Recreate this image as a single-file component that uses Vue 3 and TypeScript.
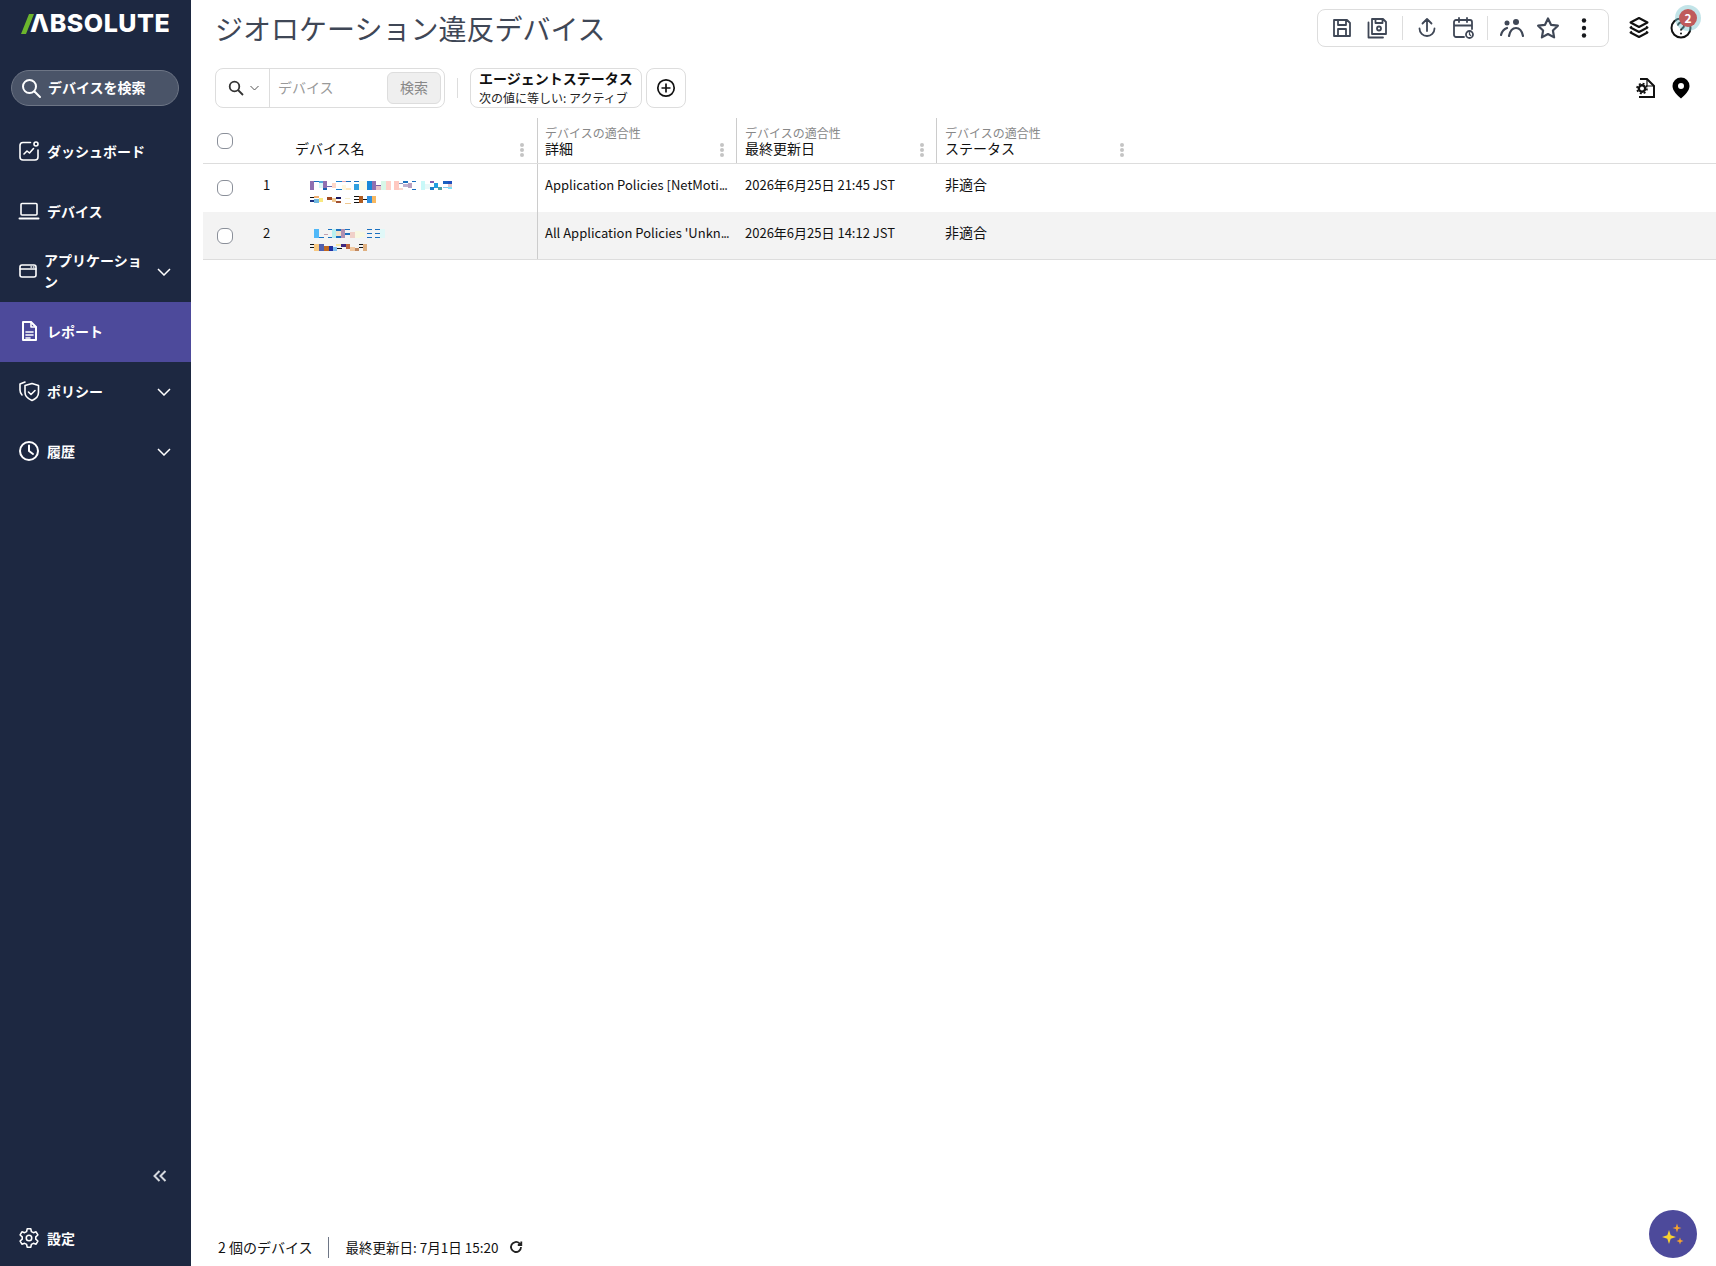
<template>
  <div class="app">
    <aside class="sidebar">
      <div class="logo">
        <svg class="logo-slash" width="14" height="20" viewBox="0 0 14 20"><polygon points="8,0 13,0 5,20 0,20" fill="#6cb52d" /></svg>
        <span class="logo-text">ΛBSOLUTE</span>
      </div>
      <div class="side-search">
        <svg width="22" height="22" viewBox="0 0 22 22" fill="none" stroke="#fff" stroke-width="2" stroke-linecap="round"><circle cx="9.5" cy="9.5" r="6.5" /><path d="M14.5 14.5 20 20" /></svg>
        <span class="side-search-label">デバイスを検索</span>
      </div>
      <nav class="nav">
        <div v-for="item in navItems" :key="item.label" class="nav-item" :class="{ active: item.active, narrow: item.icon === 'app' }">
          <span class="nav-icon">
            <svg width="22" height="22" viewBox="0 0 22 22" fill="none" stroke="#fff" stroke-width="1.6" stroke-linecap="round" stroke-linejoin="round">
              <template v-if="item.icon === 'dash'">
                <path d="M12.5 2.500H5a3 3 0 0 0-3 3V17a3 3 0 0 0 3 3h12a3 3 0 0 0 3-3V10" />
                <circle cx="18" cy="4" r="2" />
                <path d="M6 14l3-3 2.500 2 4-4.500" />
              </template>
              <template v-else-if="item.icon === 'laptop'">
                <rect x="3" y="3.500" width="16" height="11.500" rx="1" />
                <path d="M1.500 18.500h19" stroke-width="2" />
              </template>
              <template v-else-if="item.icon === 'app'">
                <rect x="2" y="5" width="16" height="12" rx="2" />
                <path d="M2 9h16M13 7h.5M15.500 7h.5" />
              </template>
              <template v-else-if="item.icon === 'report'">
                <path d="M5 2h8l5 5v13H5z" stroke-width="2" />
                <path d="M13 2v5h5M8 12h7M8 15h7M8 18h4" />
              </template>
              <template v-else-if="item.icon === 'policy'">
                <path d="M7 5.500l7-2 6.500 2v7c0 4-3 6.500-6.500 8-3.500-1.500-7-4-7-8z" />
                <path d="M10.500 12l2.500 2.500 4-4M4 15c-1-1-2-2.500-2-5V4l5-2" />
              </template>
              <template v-else>
                <circle cx="11" cy="11" r="9" stroke-width="2" />
                <path d="M11 5.500V11l4 3" stroke-width="2" />
              </template>
            </svg>
          </span>
          <span class="nav-label">{{ item.label }}</span>
          <svg v-if="item.expand" class="nav-chevron" width="14" height="8" viewBox="0 0 14 8" fill="none" stroke="#fff" stroke-width="1.5"><path d="M1 1l6 6 6-6" /></svg>
        </div>
      </nav>
      <div class="collapse">
        <svg width="14" height="12" viewBox="0 0 14 12" fill="none" stroke="#d5d8de" stroke-width="2"><path d="M6.500 1 1.500 6l5 5M12.500 1l-5 5 5 5" /></svg>
      </div>
      <div class="settings">
        <svg width="22" height="22" viewBox="0 0 24 24" fill="none" stroke="#fff" stroke-width="1.7" stroke-linejoin="round">
          <circle cx="12" cy="12" r="3" />
          <path d="M10 2h4l.6 3 2.200 1.200 2.900-1 2 3.500-2.300 2v2.600l2.300 2-2 3.500-2.900-1-2.200 1.200-.6 3h-4l-.6-3-2.200-1.200-2.900 1-2-3.500 2.300-2v-2.600l-2.300-2 2-3.500 2.900 1L9.400 5z" />
        </svg>
        <span>設定</span>
      </div>
    </aside>

    <main class="main">
      <header class="top">
        <h1>ジオロケーション違反デバイス</h1>
        <div class="top-right">
          <div class="toolbar">
            <svg class="tool" viewBox="0 0 24 24"><path d="M4 4h13l3 3v13H4zM8 4v5h8V4M8 20v-7h8v7" /></svg>
            <svg class="tool" viewBox="0 0 24 24"><path d="M6 3h11l3 3v12H6zM9.500 3v4h7V3M2.500 6.500V21.500H17" /><circle cx="13" cy="12.500" r="2" /></svg>
            <span class="tool-sep" />
            <svg class="tool" viewBox="0 0 24 24"><path d="M12 15V3M7.500 7.500 12 3l4.500 4.500M4.500 12.500a7.500 7.500 0 0 0 15 0" /></svg>
            <svg class="tool" viewBox="0 0 24 24"><path d="M13 21H5a2 2 0 0 1-2-2V6a2 2 0 0 1 2-2h14a2 2 0 0 1 2 2v7M3 9.500h18M8 2v4M16 2v4" /><circle cx="18.500" cy="18.500" r="3.500" /><path d="M18.500 16.500v2l1.200 1" stroke-width="1.200" /></svg>
            <span class="tool-sep" />
            <svg class="tool" viewBox="0 0 24 24"><circle cx="7" cy="7" r="2.500" fill="#3f4756" stroke="none" /><circle cx="16" cy="6" r="3" fill="#3f4756" stroke="none" /><path d="M1 19c1-4 3-6 6-7M9 20c1-5 3.500-8 7-8s6 3 7 8" stroke-width="2.200" /></svg>
            <svg class="tool" viewBox="0 0 24 24"><path d="M12 2.500l3 6.300 6.900.9-5 4.800 1.200 6.900-6.100-3.400-6.100 3.400 1.200-6.900-5-4.800 6.900-.9z" stroke-width="2.200" /></svg>
            <svg class="tool" viewBox="0 0 24 24"><circle cx="12" cy="4.500" r="2.200" fill="#17191d" stroke="none" /><circle cx="12" cy="12" r="2.200" fill="#17191d" stroke="none" /><circle cx="12" cy="19.500" r="2.200" fill="#17191d" stroke="none" /></svg>
          </div>
          <svg class="top-icon layers" viewBox="0 0 24 24" fill="none" stroke="#111" stroke-width="2" stroke-linejoin="round"><path d="M12 2l8.500 4.500L12 11 3.500 6.500zM5 10.500 3.500 11.500 12 16l8.500-4.500-1.500-1M5 15.500l-1.500 1L12 21l8.500-4.500-1.500-1" /></svg>
          <div class="help">
            <svg class="top-icon" viewBox="0 0 24 24" fill="none" stroke="#111" stroke-width="2"><circle cx="12" cy="12" r="9.500" /><path d="M9 9.500a3 3 0 1 1 4.500 2.600c-1 .6-1.500 1.200-1.500 2.400" /><circle cx="12" cy="17.500" r="1" fill="#111" stroke="none" /></svg>
            <span class="badge">2</span>
          </div>
        </div>
      </header>

      <div class="filters">
        <div class="search-box">
          <div class="search-type">
            <svg width="16" height="16" viewBox="0 0 16 16" fill="none" stroke="#333" stroke-width="1.800"><circle cx="6.500" cy="6.500" r="4.800" /><path d="M10 10l5 5" /></svg>
            <svg width="9" height="6" viewBox="0 0 9 6" fill="none" stroke="#555" stroke-width="1"><path d="M.5 1l4 4 4-4" /></svg>
          </div>
          <span class="search-input">デバイス</span>
          <button class="search-btn" type="button">検索</button>
        </div>
        <span class="filter-sep" />
        <div class="chip">
          <strong>エージェントステータス</strong>
          <small>次の値に等しい: アクティブ</small>
        </div>
        <button class="add-btn" type="button">
          <svg width="20" height="20" viewBox="0 0 20 20" fill="none" stroke="#111" stroke-width="1.700"><circle cx="10" cy="10" r="8.200" /><path d="M10 5.500v9M5.500 10h9" /></svg>
        </button>
        <div class="map-icons">
          <svg class="top-icon" viewBox="0 0 24 24" fill="none" stroke="#111" stroke-width="2"><path d="M7 3h7l7 7v11H6" /><path d="M14 3v7h7" stroke-width="1.200" /><circle cx="9" cy="12.500" r="3.200" stroke-width="2.400" /><circle cx="9" cy="12.500" r="5" stroke-width="1.600" stroke-dasharray="2 1.930" /></svg>
          <svg class="top-icon" viewBox="0 0 24 24"><path fill-rule="evenodd" fill="#000" d="M12 1.500a8.500 8.500 0 0 0-8.500 8.500c0 5 5 9.500 8.500 12.500 3.500-3 8.500-7.500 8.500-12.500A8.500 8.500 0 0 0 12 1.500zm0 5.500a3 3 0 1 1 0 6 3 3 0 0 1 0-6z" /></svg>
        </div>
      </div>

      <div class="table">
        <div class="row head">
          <div class="cell check top-check"><span class="radio" /></div>
          <div class="cell" />
          <div class="cell name-head">
            <span class="col-title">デバイス名</span>
            <span class="kebab"><i /><i /><i /></span>
          </div>
          <div v-for="col in columns" :key="col" class="cell col-head">
            <span class="col-group">デバイスの適合性</span>
            <span class="col-title">{{ col }}</span>
            <span class="kebab"><i /><i /><i /></span>
          </div>
          <div class="cell" />
        </div>
        <div v-for="row in rows" :key="row.id" class="row body" :class="{ alt: row.id === 2 }">
          <div class="cell check"><span class="radio" /></div>
          <div class="cell text num">{{ row.id }}</div>
          <div class="cell name">
            <svg width="150" height="24" viewBox="0 0 150 24" shape-rendering="crispEdges">
              <rect v-for="(b, i) in row.mosaic" :key="i" :x="b[0]" :y="b[1]" :width="b[2]" :height="b[3]" :fill="b[4]" />
            </svg>
          </div>
          <div class="cell text detail">{{ row.detail }}<span class="dots">...</span></div>
          <div class="cell text date">{{ row.date }}</div>
          <div class="cell text status">{{ row.status }}</div>
          <div class="cell" />
        </div>
      </div>

      <footer class="footer">
        <span>2 個のデバイス</span>
        <span class="foot-sep" />
        <span class="updated">最終更新日: 7月1日 15:20</span>
        <svg width="14" height="14" viewBox="0 0 14 14" fill="none" stroke="#222" stroke-width="1.800"><path d="M12 7a5 5 0 1 1-1.500-3.600L12 5M12.300 1.500V5H8.800" /></svg>
      </footer>
    </main>

    <button class="fab" type="button">
      <svg width="30" height="30" viewBox="0 0 30 30">
        <path d="M11 11l1.700 5.300 5.300 1.700-5.300 1.700L11 25l-1.700-5.300L4 18l5.300-1.700z" fill="#f8d22f" />
        <path d="M19 4.500l1.100 3.400 3.400 1.100-3.400 1.100-1.100 3.400-1.100-3.400-3.400-1.100 3.400-1.100z" fill="#f4a22f" />
        <path d="M22 18.500l.9 2.600 2.600.9-2.600.9-.9 2.600-.9-2.600-2.600-.9 2.600-.9z" fill="#f4a22f" />
      </svg>
    </button>
  </div>
</template>

<script setup lang="ts">
type Block = [number, number, number, number, string]

const navItems = [
  { label: 'ダッシュボード', icon: 'dash' },
  { label: 'デバイス', icon: 'laptop' },
  { label: 'アプリケーション', icon: 'app', expand: true },
  { label: 'レポート', icon: 'report', active: true },
  { label: 'ポリシー', icon: 'policy', expand: true },
  { label: '履歴', icon: 'clock', expand: true }
]

const columns = ['詳細', '最終更新日', 'ステータス']

// 元画像でモザイク処理されているデバイス名
const mosaicOne: Block[] = [
  [0, 0, 4, 9, '#9070b0'], [4, 0, 5, 1, '#1a70c0'], [9, 0, 4, 2, '#55aadd'], [9, 2, 4, 5, '#d8f8f8'], [13, 0, 4, 7, '#8f6fb0'], [13, 7, 4, 2, '#1a60b0'],
  [17, 5, 5, 1, '#6a6ab0'], [22, 2, 4, 5, '#ffd8c8'], [26, 0, 6, 1, '#1a80d0'], [26, 8, 6, 1, '#1a80d0'], [32, 0, 4, 1, '#e0a0b0'], [32, 4, 4, 5, '#fff8e0'],
  [36, 0, 5, 1, '#1a70c0'], [36, 7, 5, 2, '#ffe8c0'], [44, 0, 5, 1, '#1a70c0'], [44, 3, 5, 6, '#30a0e0'], [49, 0, 8, 9, '#fbfbe8'], [57, 0, 5, 9, '#1a88d8'],
  [62, 0, 4, 9, '#9070b0'], [66, 4, 5, 1, '#8060a0'], [66, 5, 5, 4, '#e8c0c8'], [71, 0, 5, 9, '#d8f8e8'], [76, 0, 5, 9, '#ffd0c8'], [84, 0, 5, 9, '#ffc8c0'],
  [89, 2, 4, 1, '#8090c0'], [89, 7, 4, 2, '#f8d8d0'], [93, 0, 5, 2, '#1a70c0'], [93, 3, 5, 3, '#c0b0d0'], [98, 2, 4, 5, '#b8a0c0'], [102, 0, 4, 1, '#1a70c0'], [102, 8, 4, 1, '#1a70c0'],
  [111, 0, 4, 9, '#c8f8f8'], [115, 3, 5, 5, '#e8f8f8'], [120, 0, 4, 2, '#8060b0'], [120, 6, 4, 3, '#2080c8'], [124, 2, 4, 5, '#20a0e0'], [128, 6, 4, 3, '#50a0a0'], [133, 0, 5, 3, '#1a60c0'], [133, 6, 5, 1, '#80c8f0'], [138, 0, 4, 3, '#2050c0'], [138, 3, 4, 3, '#e0c8c8'], [138, 6, 4, 2, '#80e0f8'],
  [0, 16, 4, 1, '#101010'], [0, 19, 4, 2, '#1a3080'], [4, 15, 5, 2, '#f0b070'], [4, 18, 5, 4, '#70b8e0'], [9, 17, 4, 4, '#f8e880'], [17, 16, 5, 3, '#a04820'], [22, 17, 4, 4, '#f0c890'],
  [26, 16, 5, 2, '#181860'], [26, 20, 5, 2, '#a05030'], [35, 17, 5, 1, '#f8f0d0'], [35, 22, 6, 1, '#f0c890'], [44, 15, 5, 1, '#101010'], [44, 18, 5, 1, '#101010'], [44, 21, 5, 1, '#101010'],
  [49, 15, 4, 7, '#b05c20'], [53, 18, 4, 1, '#101010'], [57, 15, 5, 7, '#3090e0'], [62, 15, 4, 7, '#f8b860']
]

const mosaicTwo: Block[] = [
  [4, 0, 5, 9, '#50b8f8'], [9, 8, 5, 1, '#1a70c0'], [14, 5, 4, 1, '#c0a0b0'], [18, 0, 4, 1, '#1a70c0'], [18, 8, 4, 1, '#1a70c0'], [22, 0, 4, 9, '#b8f0f0'],
  [26, 0, 5, 2, '#1a70c0'], [26, 2, 5, 5, '#f0e0c8'], [26, 7, 5, 2, '#1a70c0'], [31, 0, 4, 9, '#b090b0'], [35, 0, 5, 1, '#1a70c0'], [35, 4, 5, 2, '#1a70c0'], [40, 3, 5, 6, '#f0d0c8'],
  [45, 2, 5, 7, '#f8f8e0'], [50, 3, 5, 5, '#f8f8e0'], [57, 0, 5, 1, '#1a70c0'], [57, 4, 5, 1, '#1a70c0'], [57, 8, 5, 1, '#1a70c0'], [65, 0, 5, 1, '#1a70c0'], [65, 4, 5, 1, '#1a70c0'], [65, 8, 5, 1, '#1a70c0'], [70, 0, 5, 9, '#e0f8f8'],
  [0, 15, 4, 1, '#101010'], [0, 18, 4, 1, '#101010'], [4, 15, 5, 7, '#f8c880'], [9, 15, 5, 7, '#5060b0'], [14, 17, 5, 5, '#c06820'], [19, 17, 4, 5, '#2030a0'], [23, 18, 4, 4, '#80c0f0'],
  [27, 19, 5, 1, '#101010'], [26, 15, 5, 2, '#f8e8a0'], [31, 15, 5, 3, '#402880'], [36, 15, 4, 5, '#c06840'], [40, 18, 5, 4, '#f0c8a0'], [45, 19, 4, 3, '#c08860'], [49, 15, 4, 1, '#101010'], [49, 18, 4, 1, '#101010'], [53, 15, 4, 7, '#e0b080']
]

const rows = [
  { id: 1, mosaic: mosaicOne, detail: 'Application Policies [NetMoti', date: '2026年6月25日 21:45 JST', status: '非適合' },
  { id: 2, mosaic: mosaicTwo, detail: "All Application Policies 'Unkn", date: '2026年6月25日 14:12 JST', status: '非適合' }
]
</script>

<style>
html,
body {
  margin: 0;
  height: 100%;
}
</style>

<style scoped>
.app {
  display: flex;
  height: 100vh;
  overflow: hidden;
  font-family: "Noto Sans CJK JP", "Noto Sans", sans-serif;
  font-size: 14px;
  color: #111;
  background: #fff;
}

.sidebar {
  width: 191px;
  flex: none;
  display: flex;
  flex-direction: column;
  background: #1d2841;
  color: #fff;
}

.logo {
  display: flex;
  align-items: center;
  height: 48px;
  padding-left: 21px;
}

.logo-slash {
  flex: none;
}

.logo-text {
  margin: -1px 0 0 -5px;
  font-family: Inter, sans-serif;
  font-size: 25px;
  font-weight: 800;
  letter-spacing: 0.5px;
  line-height: 1;
}

.side-search {
  display: flex;
  align-items: center;
  gap: 6px;
  height: 36px;
  box-sizing: border-box;
  margin: 22px 12px 0 11px;
  padding-left: 8px;
  background: #4a5468;
  border: 1px solid #6d7585;
  border-radius: 18px;
  font-weight: 700;
}

.side-search-label {
  padding-bottom: 2px;
}

.nav {
  margin-top: 16px;
}

.nav-item {
  display: flex;
  align-items: center;
  height: 60px;
  box-sizing: border-box;
  padding: 0 20px 2px 18px;
  font-weight: 700;
}

.nav-item.active {
  background: #4d4a9b;
}

.nav-icon {
  display: flex;
  width: 29px;
  flex: none;
}

.narrow .nav-icon {
  width: 26px;
}

.nav-label {
  flex: 1;
  line-height: 21px;
}

.nav-chevron {
  flex: none;
  margin: 2px 0 0 10px;
}

.collapse {
  display: flex;
  justify-content: flex-end;
  margin-top: auto;
  padding-right: 24px;
}

.settings {
  display: flex;
  align-items: center;
  gap: 7px;
  height: 36px;
  margin: 38px 0 10px;
  padding-left: 18px;
  font-weight: 700;
}

.main {
  flex: 1;
  min-width: 0;
  display: flex;
  flex-direction: column;
}

.top {
  display: flex;
  align-items: center;
  justify-content: space-between;
  height: 56px;
  padding: 0 23px 0 24px;
}

.top h1 {
  margin: 0;
  font-size: 28px;
  font-weight: 400;
  color: #3f4756;
}

.top-right {
  display: flex;
  align-items: center;
}

.toolbar {
  display: flex;
  align-items: center;
  gap: 12px;
  height: 36px;
  padding: 0 12px;
  margin: -1px 18px 0 0;
  border: 1px solid #ddd;
  border-radius: 8px;
}

.tool {
  width: 24px;
  height: 24px;
  fill: none;
  stroke: #3f4756;
  stroke-width: 1.8;
  stroke-linecap: round;
  stroke-linejoin: round;
}

.tool-sep {
  width: 1px;
  height: 24px;
  background: #ddd;
}

.top-icon {
  width: 24px;
  height: 24px;
  display: block;
}

.layers {
  margin-right: 18px;
}

.help {
  position: relative;
}

.badge {
  position: absolute;
  top: -7px;
  left: 10px;
  width: 18px;
  height: 18px;
  border-radius: 50%;
  background: #bf5b5b;
  box-shadow: 0 0 0 4px rgba(120, 195, 205, 0.45);
  color: #fff;
  font-size: 12px;
  font-weight: 700;
  line-height: 18px;
  text-align: center;
}

.filters {
  display: flex;
  align-items: center;
  height: 40px;
  margin-top: 12px;
  padding: 0 23px 0 24px;
}

.search-box {
  display: flex;
  align-items: center;
  width: 230px;
  height: 40px;
  box-sizing: border-box;
  border: 1px solid #ddd;
  border-radius: 8px;
}

.search-type {
  display: flex;
  align-items: center;
  gap: 6px;
  height: 100%;
  width: 54px;
  flex: none;
  box-sizing: border-box;
  padding-left: 12px;
  border-right: 1px solid #ddd;
}

.search-input {
  flex: 1;
  padding: 0 0 2px 8px;
  color: #999;
}

.search-btn {
  width: 54px;
  height: 32px;
  margin-right: 3px;
  padding: 0 0 2px;
  background: #efefef;
  border: 1px solid #ddd;
  border-radius: 6px;
  color: #888;
  font: inherit;
}

.filter-sep {
  width: 1px;
  height: 20px;
  margin: 0 12px;
  background: #ddd;
}

.chip {
  display: flex;
  flex-direction: column;
  width: 172px;
  height: 40px;
  box-sizing: border-box;
  padding-left: 8px;
  border: 1px solid #ddd;
  border-radius: 8px;
}

.chip strong {
  font-size: 14px;
  line-height: 18px;
}

.chip small {
  font-size: 12px;
  line-height: 22px;
  color: #222;
}

.add-btn {
  display: flex;
  align-items: center;
  justify-content: center;
  width: 40px;
  height: 40px;
  margin-left: 4px;
  padding: 0;
  background: #fff;
  border: 1px solid #ddd;
  border-radius: 8px;
}

.map-icons {
  display: flex;
  gap: 12px;
  margin-left: auto;
}

.table {
  margin: 10px 0 0 12px;
}

.row {
  display: grid;
  grid-template-columns: 50px 43px 241px 199px 200px 200px 1fr;
  box-sizing: border-box;
}

.head {
  height: 46px;
  border-bottom: 1px solid #ddd;
}

.body {
  height: 48px;
}

.alt {
  background: #f3f3f3;
  border-bottom: 1px solid #ddd;
}

.cell {
  position: relative;
  min-width: 0;
  box-sizing: border-box;
}

.check {
  padding: 16px 0 0 14px;
}

.top-check {
  padding-top: 15px;
}

.radio {
  display: block;
  width: 16px;
  height: 16px;
  box-sizing: border-box;
  background: #fff;
  border: 1.5px solid #8a8f99;
  border-radius: 6px;
}

.name-head {
  padding-top: 23px;
}

.name-head .col-title {
  display: block;
  margin-left: -1px;
}

.name-head .kebab {
  right: 13px;
}

.col-head {
  display: flex;
  flex-direction: column;
  padding: 7px 0 0 8px;
  border-left: 1px solid #ccc;
}

.col-head:nth-child(4) {
  padding-left: 7px;
}

.col-group {
  font-size: 12px;
  line-height: 16px;
  color: #888;
}

.col-title {
  font-size: 14px;
  line-height: 15px;
}

.kebab {
  position: absolute;
  top: 25px;
  right: 12px;
  display: flex;
  flex-direction: column;
  gap: 1px;
}

.kebab i {
  display: block;
  width: 4px;
  height: 4px;
  background: #c4c4c4;
  border-radius: 50%;
}

.text {
  padding-top: 12px;
  font-size: 13px;
  line-height: 18px;
  white-space: nowrap;
}

.num {
  padding-left: 10px;
}

.name {
  padding: 17px 0 0 14px;
}

.name svg {
  display: block;
}

.detail {
  padding-left: 7px;
  border-left: 1px solid #ccc;
}

.dots {
  letter-spacing: -1px;
}

.date,
.status {
  padding-left: 9px;
}

.status {
  padding-top: 11px;
  font-size: 14px;
}

.footer {
  display: flex;
  align-items: center;
  height: 24px;
  margin-top: auto;
  margin-bottom: 7px;
  padding-left: 27px;
  font-size: 14px;
}

.foot-sep {
  width: 1px;
  height: 21px;
  margin: 0 17px 0 15px;
  background: #6e7686;
}

.updated {
  font-size: 13.5px;
}

.footer svg {
  margin-left: 10px;
}

.fab {
  position: fixed;
  right: 19px;
  bottom: 8px;
  display: flex;
  align-items: center;
  justify-content: center;
  width: 48px;
  height: 48px;
  padding: 0;
  background: #4d4a9b;
  border: none;
  border-radius: 50%;
}
</style>
